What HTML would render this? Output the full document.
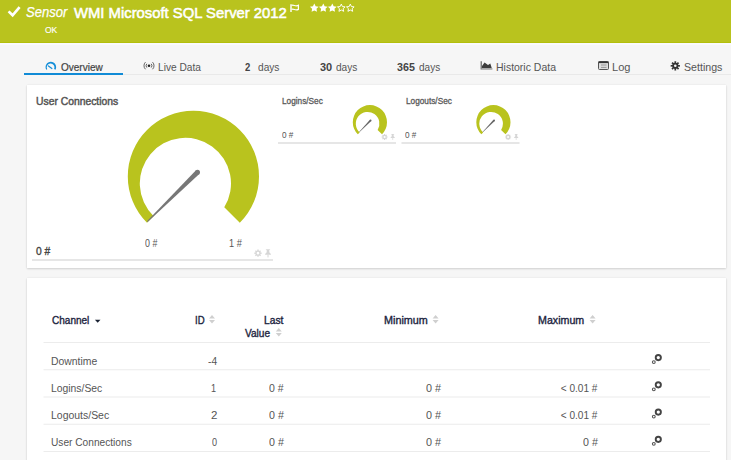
<!DOCTYPE html>
<html><head><meta charset="utf-8">
<style>
html,body{margin:0;padding:0}
body{width:731px;height:460px;overflow:hidden;background:#f6f6f6;position:relative;font-family:"Liberation Sans",sans-serif}
.a{position:absolute;white-space:nowrap;line-height:1;transform-origin:0 0}
.card{position:absolute;background:#fff;box-shadow:0 1px 2px rgba(0,0,0,0.14),0 0 2px rgba(0,0,0,0.07)}
svg{position:absolute;overflow:visible}
</style></head><body>
<div style="position:absolute;left:0;top:0;width:731px;height:42px;background:#b9c31e"></div>
<div style="position:absolute;left:0;top:42px;width:731px;height:1px;background:#b3bf0c"></div>
<div style="position:absolute;left:0;top:43px;width:731px;height:2px;background:#fafafc"></div>
<div class="card" style="left:27px;top:85px;width:699px;height:183px"></div>
<div class="card" style="left:27px;top:278px;width:699px;height:200px"></div>
<div class="a" style="left:26.00px;top:4.97px;font-size:14.8px;font-weight:normal;font-style:italic;color:#fff;transform:scaleX(0.8833);-webkit-text-stroke:0.25px #fff">Sensor</div>
<div class="a" style="left:73.90px;top:4.80px;font-size:15px;font-weight:normal;font-style:normal;color:#fff;transform:scaleX(0.9884);-webkit-text-stroke:0.55px #fff">WMI Microsoft SQL Server 2012</div>
<div class="a" style="left:44.50px;top:24.59px;font-size:9.7px;font-weight:normal;font-style:normal;color:#fff;transform:scaleX(0.8786);-webkit-text-stroke:0.15px #fff">OK</div>
<div class="a" style="left:60.60px;top:62.59px;font-size:10.4px;font-weight:normal;font-style:normal;color:#444;transform:scaleX(0.9636);-webkit-text-stroke:0.2px #444">Overview</div>
<div class="a" style="left:158.12px;top:62.69px;font-size:10.4px;font-weight:normal;font-style:normal;color:#555;transform:scaleX(0.9767)">Live Data</div>
<div class="a" style="left:244.90px;top:62.69px;font-size:10.4px;font-weight:bold;font-style:normal;color:#444;transform:scaleX(0.9167)">2</div>
<div class="a" style="left:258.00px;top:62.69px;font-size:10.4px;font-weight:normal;font-style:normal;color:#555;transform:scaleX(0.9773)">days</div>
<div class="a" style="left:320.00px;top:62.69px;font-size:10.4px;font-weight:bold;font-style:normal;color:#444;transform:scaleX(1.0545)">30</div>
<div class="a" style="left:336.40px;top:62.69px;font-size:10.4px;font-weight:normal;font-style:normal;color:#555;transform:scaleX(0.9727)">days</div>
<div class="a" style="left:397.20px;top:62.69px;font-size:10.4px;font-weight:bold;font-style:normal;color:#444;transform:scaleX(1.0294)">365</div>
<div class="a" style="left:418.70px;top:62.69px;font-size:10.4px;font-weight:normal;font-style:normal;color:#555;transform:scaleX(0.9636)">days</div>
<div class="a" style="left:496.39px;top:62.69px;font-size:10.4px;font-weight:normal;font-style:normal;color:#555;transform:scaleX(1.0085)">Historic Data</div>
<div class="a" style="left:612.14px;top:62.69px;font-size:10.4px;font-weight:normal;font-style:normal;color:#555;transform:scaleX(1.0625)">Log</div>
<div class="a" style="left:684.20px;top:62.69px;font-size:10.4px;font-weight:normal;font-style:normal;color:#555;transform:scaleX(1.0216)">Settings</div>
<div class="a" style="left:35.70px;top:97.38px;font-size:10.3px;font-weight:normal;font-style:normal;color:#555;transform:scaleX(1.0037);-webkit-text-stroke:0.45px #555">User Connections</div>
<div class="a" style="left:35.70px;top:245.92px;font-size:11.2px;font-weight:normal;font-style:normal;color:#444;transform:scaleX(0.9187);-webkit-text-stroke:0.35px #444">0 #</div>
<div class="a" style="left:145.00px;top:239.49px;font-size:10.4px;font-weight:normal;font-style:normal;color:#555;transform:scaleX(0.8533)">0 #</div>
<div class="a" style="left:228.71px;top:239.49px;font-size:10.4px;font-weight:normal;font-style:normal;color:#555;transform:scaleX(0.8857)">1 #</div>
<div class="a" style="left:281.90px;top:96.53px;font-size:8.7px;font-weight:normal;font-style:normal;color:#5a5a5a;transform:scaleX(0.9488);-webkit-text-stroke:0.3px #5a5a5a">Logins/Sec</div>
<div class="a" style="left:281.85px;top:131.43px;font-size:9.3px;font-weight:normal;font-style:normal;color:#555;transform:scaleX(0.8808)">0 #</div>
<div class="a" style="left:405.50px;top:96.53px;font-size:8.7px;font-weight:normal;font-style:normal;color:#5a5a5a;transform:scaleX(0.9490);-webkit-text-stroke:0.3px #5a5a5a">Logouts/Sec</div>
<div class="a" style="left:405.35px;top:131.43px;font-size:9.3px;font-weight:normal;font-style:normal;color:#555;transform:scaleX(0.8808)">0 #</div>
<div class="a" style="left:52.10px;top:315.98px;font-size:10.3px;font-weight:normal;font-style:normal;color:#1c2440;transform:scaleX(0.9737);-webkit-text-stroke:0.35px #1c2440">Channel</div>
<div class="a" style="left:194.70px;top:315.98px;font-size:10.3px;font-weight:normal;font-style:normal;color:#1c2440;transform:scaleX(0.9300);-webkit-text-stroke:0.35px #1c2440">ID</div>
<div class="a" style="left:263.50px;top:315.98px;font-size:10.3px;font-weight:normal;font-style:normal;color:#1c2440;transform:scaleX(0.9950);-webkit-text-stroke:0.35px #1c2440">Last</div>
<div class="a" style="left:245.30px;top:328.78px;font-size:10.3px;font-weight:normal;font-style:normal;color:#1c2440;transform:scaleX(0.9808);-webkit-text-stroke:0.35px #1c2440">Value</div>
<div class="a" style="left:383.80px;top:316.08px;font-size:10.3px;font-weight:normal;font-style:normal;color:#1c2440;transform:scaleX(1.0476);-webkit-text-stroke:0.35px #1c2440">Minimum</div>
<div class="a" style="left:538.40px;top:316.08px;font-size:10.3px;font-weight:normal;font-style:normal;color:#1c2440;transform:scaleX(1.0356);-webkit-text-stroke:0.35px #1c2440">Maximum</div>
<div class="a" style="left:50.67px;top:356.65px;font-size:10.1px;font-weight:normal;font-style:normal;color:#555;transform:scaleX(1.0295)">Downtime</div>
<div class="a" style="left:207.80px;top:356.65px;font-size:10.1px;font-weight:normal;font-style:normal;color:#555;transform:scaleX(1.0111)">-4</div>
<div class="a" style="left:51.37px;top:383.95px;font-size:10.1px;font-weight:normal;font-style:normal;color:#555;transform:scaleX(1.0265)">Logins/Sec</div>
<div class="a" style="left:211.10px;top:383.95px;font-size:10.1px;font-weight:normal;font-style:normal;color:#555;transform:scaleX(0.9000)">1</div>
<div class="a" style="left:269.00px;top:383.95px;font-size:10.1px;font-weight:normal;font-style:normal;color:#555;transform:scaleX(1.0429)">0 #</div>
<div class="a" style="left:426.00px;top:383.95px;font-size:10.1px;font-weight:normal;font-style:normal;color:#555;transform:scaleX(1.0714)">0 #</div>
<div class="a" style="left:560.70px;top:383.95px;font-size:10.1px;font-weight:normal;font-style:normal;color:#555;transform:scaleX(1.0000)">&lt; 0.01 #</div>
<div class="a" style="left:51.36px;top:411.05px;font-size:10.1px;font-weight:normal;font-style:normal;color:#555;transform:scaleX(1.0364)">Logouts/Sec</div>
<div class="a" style="left:211.30px;top:411.05px;font-size:10.1px;font-weight:normal;font-style:normal;color:#555;transform:scaleX(1.1400)">2</div>
<div class="a" style="left:268.70px;top:411.05px;font-size:10.1px;font-weight:normal;font-style:normal;color:#555;transform:scaleX(1.0571)">0 #</div>
<div class="a" style="left:426.00px;top:411.05px;font-size:10.1px;font-weight:normal;font-style:normal;color:#555;transform:scaleX(1.0714)">0 #</div>
<div class="a" style="left:560.70px;top:411.05px;font-size:10.1px;font-weight:normal;font-style:normal;color:#555;transform:scaleX(1.0000)">&lt; 0.01 #</div>
<div class="a" style="left:51.10px;top:438.15px;font-size:10.1px;font-weight:normal;font-style:normal;color:#555;transform:scaleX(1.0063)">User Connections</div>
<div class="a" style="left:211.50px;top:438.15px;font-size:10.1px;font-weight:normal;font-style:normal;color:#555;transform:scaleX(0.9000)">0</div>
<div class="a" style="left:268.70px;top:438.15px;font-size:10.1px;font-weight:normal;font-style:normal;color:#555;transform:scaleX(1.0571)">0 #</div>
<div class="a" style="left:426.00px;top:438.15px;font-size:10.1px;font-weight:normal;font-style:normal;color:#555;transform:scaleX(1.0714)">0 #</div>
<div class="a" style="left:582.90px;top:438.15px;font-size:10.1px;font-weight:normal;font-style:normal;color:#555;transform:scaleX(1.0571)">0 #</div>
<svg style="left:0;top:0" width="731" height="460">
<polyline points="8.6,11.4 12.6,15.3 19.6,7.2" fill="none" stroke="#fff" stroke-width="2.7"/>
<path d="M291,4.3 V11.9" stroke="#fff" stroke-width="1.4"/>
<path d="M291.6,5.5 C293.4,4.0 295.4,7.3 298.4,5.3 V9.4 C295.4,11.2 293.4,8.1 291.6,9.5" fill="none" stroke="#fff" stroke-width="1.25"/>
<path d="M314.30,3.50 L315.65,6.24 L318.67,6.68 L316.49,8.81 L317.00,11.82 L314.30,10.40 L311.60,11.82 L312.11,8.81 L309.93,6.68 L312.95,6.24Z" fill="#fff"/>
<path d="M323.30,3.50 L324.65,6.24 L327.67,6.68 L325.49,8.81 L326.00,11.82 L323.30,10.40 L320.60,11.82 L321.11,8.81 L318.93,6.68 L321.95,6.24Z" fill="#fff"/>
<path d="M332.30,3.50 L333.65,6.24 L336.67,6.68 L334.49,8.81 L335.00,11.82 L332.30,10.40 L329.60,11.82 L330.11,8.81 L327.93,6.68 L330.95,6.24Z" fill="#fff"/>
<path d="M341.30,4.10 L342.42,6.56 L345.10,6.86 L343.11,8.69 L343.65,11.34 L341.30,10.00 L338.95,11.34 L339.49,8.69 L337.50,6.86 L340.18,6.56Z" fill="none" stroke="#fff" stroke-width="0.95"/>
<path d="M350.30,4.10 L351.42,6.56 L354.10,6.86 L352.11,8.69 L352.65,11.34 L350.30,10.00 L347.95,11.34 L348.49,8.69 L346.50,6.86 L349.18,6.56Z" fill="none" stroke="#fff" stroke-width="0.95"/>
<rect x="24" y="74" width="707" height="1" fill="#e9e9e9"/>
<rect x="24" y="73" width="99" height="2" fill="#118bd6"/>
<path d="M46.26,69.80 A5.3,5.3 0 1 1 55.44,69.80 L54.11,69.03 A3.85,3.85 0 1 0 47.20,69.26 Z" fill="#168fd8"/>
<path d="M48.4,65.9 L51.9,68.5" stroke="#168fd8" stroke-width="1.2" stroke-linecap="round"/>
<circle cx="149" cy="65.7" r="1.3" fill="#222"/>
<path d="M146.78,63.84 A2.9,2.9 0 0 0 146.78,67.56 M151.22,63.84 A2.9,2.9 0 0 1 151.22,67.56" fill="none" stroke="#5a5a5a" stroke-width="0.95"/>
<path d="M145.46,62.16 A5.0,5.0 0 0 0 145.46,69.24 M152.54,62.16 A5.0,5.0 0 0 1 152.54,69.24" fill="none" stroke="#5a5a5a" stroke-width="0.95"/>
<path d="M481.2,61.2 V69.6" fill="none" stroke="#555" stroke-width="1.1"/>
<path d="M482,68.2 L482,66 L484.6,62.4 L488,65.1 L490.3,63.6 L491.8,68.2 Z" fill="#3d3d3d"/>
<rect x="481.6" y="68" width="10.8" height="1.8" fill="#a8a8a8"/>
<rect x="598.5" y="61.5" width="10" height="8" rx="1" fill="#ddd" stroke="#555" stroke-width="1"/>
<rect x="598.5" y="61.5" width="10" height="1.6" fill="#333"/>
<path d="M601,65 H606.5 M601,67.4 H606.5" stroke="#888" stroke-width="0.8"/>
<path d="M678.41,65.03 L679.91,64.89 L679.91,66.71 L678.41,66.57 L678.04,67.45 L679.20,68.42 L677.92,69.70 L676.95,68.54 L676.07,68.91 L676.21,70.41 L674.39,70.41 L674.53,68.91 L673.65,68.54 L672.68,69.70 L671.40,68.42 L672.56,67.45 L672.19,66.57 L670.69,66.71 L670.69,64.89 L672.19,65.03 L672.56,64.15 L671.40,63.18 L672.68,61.90 L673.65,63.06 L674.53,62.69 L674.39,61.19 L676.21,61.19 L676.07,62.69 L676.95,63.06 L677.92,61.90 L679.20,63.18 L678.04,64.15Z M676.60,65.80 A1.3,1.3 0 1 0 674.00,65.80 A1.3,1.3 0 1 0 676.60,65.80Z" fill="#333" fill-rule="evenodd"/>
<path d="M147.01,222.79 A65.6,65.6 0 1 1 239.79,222.79 L224.26,207.26 A45.6,45.6 0 1 0 153.66,216.14 Z" fill="#b9c31e"/>
<path d="M195.74,170.42 L146.95,221.34 L147.65,222.06 L199.26,173.98Z" fill="#777"/><circle cx="197.5" cy="172.2" r="2.5" fill="#777"/>
<rect x="32" y="259" width="241" height="2" fill="#e6e6e6"/>
<path d="M357.81,134.29 A17.1,17.1 0 1 1 381.99,134.29 L377.62,129.92 A11.8,11.8 0 1 0 359.67,132.43 Z" fill="#b9c31e"/>
<path d="M369.95,119.77 L359.06,132.06 L359.34,132.34 L371.25,121.03Z" fill="#666"/><circle cx="370.6" cy="120.4" r="0.9" fill="#666"/>
<rect x="278" y="142" width="118" height="2" fill="#e6e6e6"/>
<path d="M386.78,136.46 L387.64,136.40 L387.64,137.60 L386.78,137.54 L386.53,138.16 L387.17,138.73 L386.33,139.57 L385.76,138.93 L385.14,139.18 L385.20,140.04 L384.00,140.04 L384.06,139.18 L383.44,138.93 L382.87,139.57 L382.03,138.73 L382.67,138.16 L382.42,137.54 L381.56,137.60 L381.56,136.40 L382.42,136.46 L382.67,135.84 L382.03,135.27 L382.87,134.43 L383.44,135.07 L384.06,134.82 L384.00,133.96 L385.20,133.96 L385.14,134.82 L385.76,135.07 L386.33,134.43 L387.17,135.27 L386.53,135.84Z M385.65,137.00 A1.05,1.05 0 1 0 383.55,137.00 A1.05,1.05 0 1 0 385.65,137.00Z" fill="#d6d6d6" fill-rule="evenodd"/>
<path d="M390.97,134.00 L394.43,134.00 L393.64,134.79 L393.64,136.16 L394.79,137.53 L394.79,138.03 L390.61,138.03 L390.61,137.53 L391.76,136.16 L391.76,134.79Z" fill="#d6d6d6"/><path d="M392.70,137.96 V139.90" stroke="#d6d6d6" stroke-width="0.72"/>
<path d="M481.31,134.29 A17.1,17.1 0 1 1 505.49,134.29 L501.12,129.92 A11.8,11.8 0 1 0 483.17,132.43 Z" fill="#b9c31e"/>
<path d="M493.45,119.77 L482.56,132.06 L482.84,132.34 L494.75,121.03Z" fill="#666"/><circle cx="494.1" cy="120.4" r="0.9" fill="#666"/>
<rect x="401.5" y="142" width="118" height="2" fill="#e6e6e6"/>
<path d="M510.28,136.46 L511.14,136.40 L511.14,137.60 L510.28,137.54 L510.03,138.16 L510.67,138.73 L509.83,139.57 L509.26,138.93 L508.64,139.18 L508.70,140.04 L507.50,140.04 L507.56,139.18 L506.94,138.93 L506.37,139.57 L505.53,138.73 L506.17,138.16 L505.92,137.54 L505.06,137.60 L505.06,136.40 L505.92,136.46 L506.17,135.84 L505.53,135.27 L506.37,134.43 L506.94,135.07 L507.56,134.82 L507.50,133.96 L508.70,133.96 L508.64,134.82 L509.26,135.07 L509.83,134.43 L510.67,135.27 L510.03,135.84Z M509.15,137.00 A1.05,1.05 0 1 0 507.05,137.00 A1.05,1.05 0 1 0 509.15,137.00Z" fill="#d6d6d6" fill-rule="evenodd"/>
<path d="M514.47,134.00 L517.93,134.00 L517.14,134.79 L517.14,136.16 L518.29,137.53 L518.29,138.03 L514.11,138.03 L514.11,137.53 L515.26,136.16 L515.26,134.79Z" fill="#d6d6d6"/><path d="M516.20,137.96 V139.90" stroke="#d6d6d6" stroke-width="0.72"/>
<path d="M260.62,252.55 L261.63,252.49 L261.63,253.91 L260.62,253.85 L260.31,254.59 L261.07,255.26 L260.06,256.27 L259.39,255.51 L258.65,255.82 L258.71,256.83 L257.29,256.83 L257.35,255.82 L256.61,255.51 L255.94,256.27 L254.93,255.26 L255.69,254.59 L255.38,253.85 L254.37,253.91 L254.37,252.49 L255.38,252.55 L255.69,251.81 L254.93,251.14 L255.94,250.13 L256.61,250.89 L257.35,250.58 L257.29,249.57 L258.71,249.57 L258.65,250.58 L259.39,250.89 L260.06,250.13 L261.07,251.14 L260.31,251.81Z M259.35,253.20 A1.35,1.35 0 1 0 256.65,253.20 A1.35,1.35 0 1 0 259.35,253.20Z" fill="#d6d6d6" fill-rule="evenodd"/>
<path d="M265.60,249.20 L270.40,249.20 L269.30,250.30 L269.30,252.20 L270.90,254.10 L270.90,254.80 L265.10,254.80 L265.10,254.10 L266.70,252.20 L266.70,250.30Z" fill="#d6d6d6"/><path d="M268.00,254.70 V257.40" stroke="#d6d6d6" stroke-width="1.00"/>
<path d="M94.9,319.8 H100.5 L97.7,322.8 Z" fill="#1a2233"/>
<path d="M209.0,318.59999999999997 L212.0,315.0 L215.0,318.59999999999997 Z M209.0,319.9 L212.0,323.4 L215.0,319.9 Z" fill="#cfcfcf"/>
<path d="M275.8,331.59999999999997 L278.8,328.0 L281.8,331.59999999999997 Z M275.8,332.9 L278.8,336.4 L281.8,332.9 Z" fill="#cfcfcf"/>
<path d="M432.6,318.59999999999997 L435.6,315.0 L438.6,318.59999999999997 Z M432.6,319.9 L435.6,323.4 L438.6,319.9 Z" fill="#cfcfcf"/>
<path d="M589.5999999999999,318.59999999999997 L592.5999999999999,315.0 L595.5999999999999,318.59999999999997 Z M589.5999999999999,319.9 L592.5999999999999,323.4 L595.5999999999999,319.9 Z" fill="#cfcfcf"/>
<rect x="43.5" y="342.00" width="666.5" height="1" fill="#ececec"/>
<rect x="43.5" y="369.25" width="666.5" height="1" fill="#ececec"/>
<rect x="43.5" y="396.50" width="666.5" height="1" fill="#ececec"/>
<rect x="43.5" y="423.75" width="666.5" height="1" fill="#ececec"/>
<rect x="43.5" y="451.00" width="666.5" height="1" fill="#ececec"/>
<circle cx="658.3" cy="357.60" r="2.6" fill="none" stroke="#444" stroke-width="1.9"/>
<circle cx="653.8" cy="362.10" r="1.4" fill="none" stroke="#555" stroke-width="1.1"/>
<circle cx="658.3" cy="384.85" r="2.6" fill="none" stroke="#444" stroke-width="1.9"/>
<circle cx="653.8" cy="389.35" r="1.4" fill="none" stroke="#555" stroke-width="1.1"/>
<circle cx="658.3" cy="412.10" r="2.6" fill="none" stroke="#444" stroke-width="1.9"/>
<circle cx="653.8" cy="416.60" r="1.4" fill="none" stroke="#555" stroke-width="1.1"/>
<circle cx="658.3" cy="439.35" r="2.6" fill="none" stroke="#444" stroke-width="1.9"/>
<circle cx="653.8" cy="443.85" r="1.4" fill="none" stroke="#555" stroke-width="1.1"/>
</svg>
</body></html>
